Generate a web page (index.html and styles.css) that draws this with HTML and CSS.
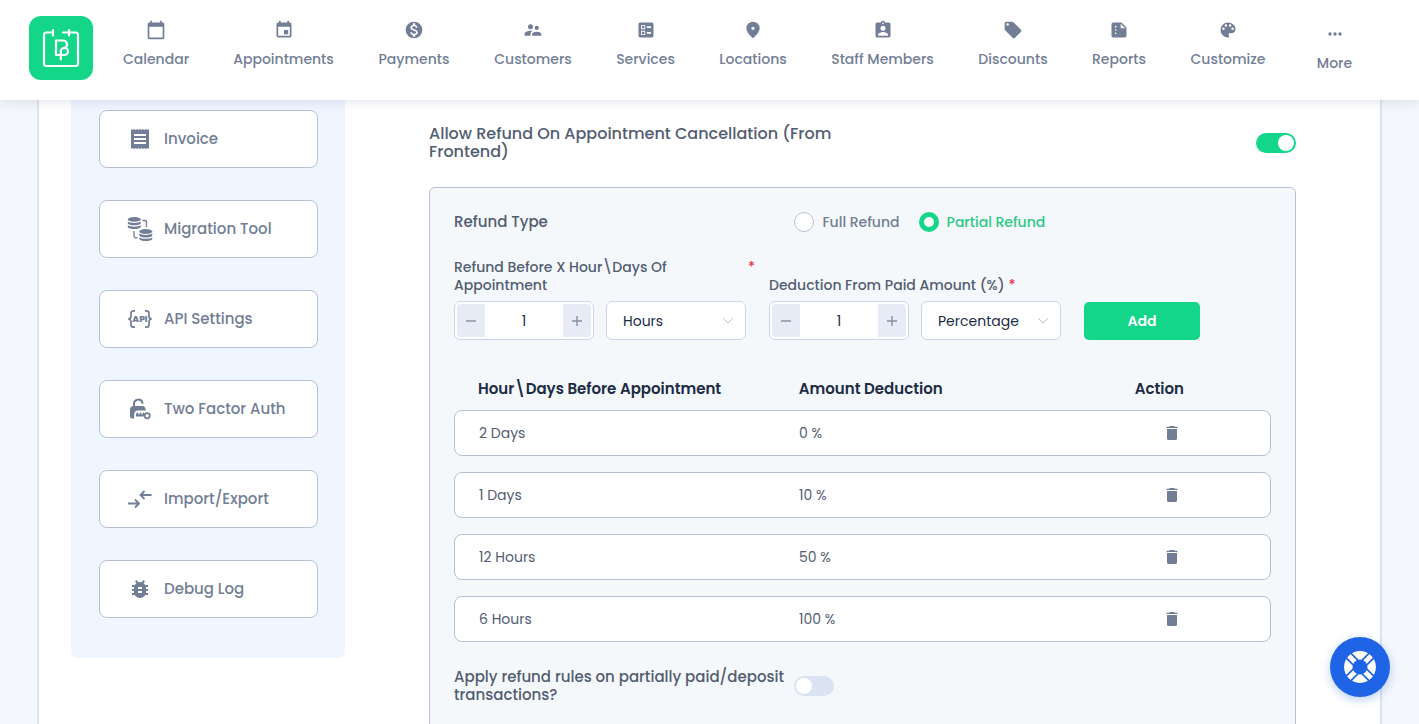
FILE: index.html
```html
<!DOCTYPE html>
<html lang="en">
<head>
<meta charset="utf-8">
<meta name="viewport" content="width=device-width, initial-scale=1">
<title>Refund Settings</title>
<link rel="stylesheet" href="styles.css">
</head>
<body>
<header class="topbar">
  <a class="logo" href="#" aria-label="Home">
    <svg viewBox="0 0 64 64" fill="none" stroke="#fff" stroke-width="2.200" stroke-linecap="round" stroke-linejoin="round">
      <path d="M24 16.500h-6.500a2.500 2.500 0 0 0-2.500 2.500v28.500a2.500 2.500 0 0 0 2.500 2.500h29a2.500 2.500 0 0 0 2.500-2.500V19a2.500 2.500 0 0 0-2.500-2.500H34M24 14v5.500M40 14v5.500"/>
      <path d="M30.500 39H27V24.500h7a4 4 0 0 1 2 7.500M31.800 43.500v-8a3.600 3.600 0 1 1 3.600 3.500H30.500"/>
    </svg>
  </a>
  <nav class="nav" aria-label="Main">
    <a class="nav-item" href="#"><svg class="icon" viewBox="0 0 24 24"><path d="M20 3h-1V1h-2v2H7V1H5v2H4c-1.100 0-2 .9-2 2v16c0 1.100.9 2 2 2h16c1.100 0 2-.9 2-2V5c0-1.100-.9-2-2-2zm0 18H4V8h16v13z"/></svg><span>Calendar</span></a>
    <a class="nav-item" href="#"><svg class="icon" viewBox="0 0 24 24"><path d="M19 3h-1V1h-2v2H8V1H6v2H5a2 2 0 0 0-2 2v14c0 1.100.9 2 2 2h14c1.100 0 2-.9 2-2V5c0-1.100-.9-2-2-2zm0 16H5V8h14v11zm-7-7h5v5h-5z"/></svg><span>Appointments</span></a>
    <a class="nav-item" href="#"><svg class="icon" viewBox="0 0 24 24"><path d="M12 2a10 10 0 1 0 0 20 10 10 0 0 0 0-20zm1.410 16.090V20h-2.670v-1.930c-1.710-.36-3.160-1.460-3.270-3.400h1.960c.1 1.050.82 1.870 2.650 1.870 1.960 0 2.400-.98 2.400-1.590 0-.83-.44-1.610-2.670-2.140-2.480-.6-4.180-1.620-4.180-3.670 0-1.720 1.390-2.840 3.110-3.210V4h2.670v1.950c1.860.45 2.790 1.860 2.850 3.390H14.300c-.05-1.110-.64-1.870-2.220-1.870-1.500 0-2.400.68-2.400 1.640 0 .84.650 1.390 2.670 1.910s4.180 1.390 4.180 3.910c-.01 1.830-1.380 2.830-3.120 3.160z"/></svg><span>Payments</span></a>
    <a class="nav-item" href="#"><svg class="icon" viewBox="0 0 24 24"><path d="M16.500 12a2.500 2.500 0 1 0 0-5 2.500 2.500 0 0 0 0 5zM9 11a3 3 0 1 0 0-6 3 3 0 0 0 0 6zm7.500 3c-1.830 0-5.500.92-5.500 2.750V19h11v-2.250c0-1.830-3.670-2.750-5.500-2.750zM9 13c-2.330 0-7 1.170-7 3.500V19h7v-2.250c0-.85.330-2.340 2.370-3.470C10.500 13.100 9.660 13 9 13z"/></svg><span>Customers</span></a>
    <a class="nav-item" href="#"><svg class="icon" viewBox="0 0 24 24"><path d="M13 9.500h5v-2h-5v2zm0 7h5v-2h-5v2zM19 21H5c-1.100 0-2-.9-2-2V5c0-1.100.9-2 2-2h14c1.100 0 2 .9 2 2v14c0 1.100-.9 2-2 2zM6 11h5V6H6v5zm1-4h3v3H7V7zM6 18h5v-5H6v5zm1-4h3v3H7v-3z"/></svg><span>Services</span></a>
    <a class="nav-item" href="#"><svg class="icon" viewBox="0 0 24 24"><path d="M12 2a8 8 0 0 0-8 8c0 5.500 8 12 8 12s8-6.500 8-12a8 8 0 0 0-8-8zm0 10a2 2 0 1 1 0-4 2 2 0 0 1 0 4z"/></svg><span>Locations</span></a>
    <a class="nav-item" href="#"><svg class="icon" viewBox="0 0 24 24"><path d="M19 3h-4.180a3 3 0 0 0-5.640 0H5c-1.100 0-2 .9-2 2v14c0 1.100.9 2 2 2h14c1.100 0 2-.9 2-2V5c0-1.100-.9-2-2-2zm-7 0a1 1 0 1 1 0 2 1 1 0 0 1 0-2zm0 4a3 3 0 1 1 0 6 3 3 0 0 1 0-6zm6 12H6v-1.400c0-2 4-3.100 6-3.100s6 1.100 6 3.100V19z"/></svg><span>Staff Members</span></a>
    <a class="nav-item" href="#"><svg class="icon" viewBox="0 0 24 24"><path d="m21.410 11.580-9-9A2 2 0 0 0 11 2H4a2 2 0 0 0-2 2v7c0 .55.220 1.050.59 1.420l9 9a2 2 0 0 0 2.820 0l7-7a2 2 0 0 0 0-2.840zM5.500 7a1.500 1.500 0 1 1 0-3 1.500 1.500 0 0 1 0 3z"/></svg><span>Discounts</span></a>
    <a class="nav-item" href="#"><svg class="icon" viewBox="0 0 24 24"><path d="M15 3H5a2 2 0 0 0-2 2v14c0 1.100.9 2 2 2h14a2 2 0 0 0 2-2V9l-6-6zM8 17a1 1 0 1 1 0-2 1 1 0 0 1 0 2zm0-4a1 1 0 1 1 0-2 1 1 0 0 1 0 2zm0-4a1 1 0 1 1 0-2 1 1 0 0 1 0 2zm6 1V4.500l5.500 5.500H14z"/></svg><span>Reports</span></a>
    <a class="nav-item" href="#"><svg class="icon" viewBox="0 0 24 24"><path d="M12 3a9 9 0 0 0 0 18c.83 0 1.500-.67 1.500-1.500 0-.39-.15-.74-.39-1.010-.23-.26-.38-.61-.38-.99 0-.83.670-1.500 1.500-1.500H16a5 5 0 0 0 5-5c0-4.420-4.030-8-9-8zm-5.500 9a1.500 1.500 0 1 1 0-3 1.500 1.500 0 0 1 0 3zm3-4a1.500 1.500 0 1 1 0-3 1.500 1.500 0 0 1 0 3zm5 0a1.500 1.500 0 1 1 0-3 1.500 1.500 0 0 1 0 3zm3 4a1.500 1.500 0 1 1 0-3 1.500 1.500 0 0 1 0 3z"/></svg><span>Customize</span></a>
    <a class="nav-item nav-more" href="#"><svg class="icon" viewBox="0 0 24 24"><circle cx="6" cy="12" r="2"/><circle cx="12" cy="12" r="2"/><circle cx="18" cy="12" r="2"/></svg><span>More</span></a>
  </nav>
</header>

<main class="page">
  <div class="panel">
    <aside class="sidebar">
      <button class="side-btn" type="button"><svg class="side-icon" viewBox="0 0 26 26"><path d="M4 3l1.500 1L7 3l1.500 1L10 3l1.500 1L13 3l1.500 1L16 3l1.500 1L19 3l1.500 1L22 3v20l-1.500-1-1.500 1-1.500-1-1.500 1-1.500-1-1.500 1-1.500-1-1.500 1-1.500-1L7 23l-1.500-1L4 23zM7 8v2h12V8zm0 4v2h12v-2zm0 4v2h12v-2z"/></svg>Invoice</button>
      <button class="side-btn" type="button"><svg class="side-icon" viewBox="0 0 26 26"><ellipse cx="7.300" cy="3.400" rx="6.500" ry="2.400"/><path d="M.8 5.500c2 1.900 11 1.900 13 0v1.800c-1 2.700-12 2.700-13 0zM.8 9.300c2 1.900 11 1.900 13 0v1.600c-1 2.700-12 2.700-13 0z"/><ellipse cx="18.800" cy="15.500" rx="6.500" ry="2.400"/><path d="M12.300 17.600c2 1.900 11 1.900 13 0v1.800c-1 2.700-12 2.700-13 0zM12.300 21.400c2 1.900 11 1.900 13 0V23c-1 2.700-12 2.700-13 0z"/><path d="M15.500 4.500H18a1.500 1.500 0 0 1 1.500 1.500v5M7 15v5a1.800 1.800 0 0 0 1.800 1.800h2" fill="none" stroke="#727e95" stroke-width="1.300"/></svg>Migration Tool</button>
      <button class="side-btn" type="button"><svg class="side-icon" viewBox="0 0 26 26"><path d="M8 4.800H6.500A2.500 2.500 0 0 0 4 7.300V10q0 3-2.800 3 2.800 0 2.800 3v2.700a2.500 2.500 0 0 0 2.500 2.500H8M18 4.800h1.500A2.500 2.500 0 0 1 22 7.300V10q0 3 2.800 3-2.800 0-2.800 3v2.700a2.500 2.500 0 0 1-2.500 2.500H18" fill="none" stroke="#727e95" stroke-width="1.700"/><text class="api-text" x="13" y="16" text-anchor="middle">API</text></svg>API Settings</button>
      <button class="side-btn" type="button"><svg class="side-icon" viewBox="0 0 26 26"><path d="M7 10.500V8a4.300 4.300 0 0 1 8.500-1" fill="none" stroke="#727e95" stroke-width="2" stroke-linecap="round"/><path d="M6 10h9.500q3 0 3.300 4.500H11q-3.500 0-3.800 3.500v4.500H5.500Q3 22.500 3 20v-6.500Q3 10.500 6 10z"/><path d="M9 18.800q0-2.300 1.500-2.300h.8v1.700h1.400v-1.700h1.500v1.700h1.400v-1.700H17v4H9z"/><circle cx="20.200" cy="19.700" r="2.600" fill="none" stroke="#727e95" stroke-width="1.700"/></svg>Two Factor Auth</button>
      <button class="side-btn" type="button"><svg class="side-icon" viewBox="0 0 26 26"><path d="M24.500 9H13.500m4-4-4 4 4 4M1 17.500h11m-4-4 4 4-4 4" fill="none" stroke="#727e95" stroke-width="1.800"/></svg>Import/Export</button>
      <button class="side-btn" type="button"><svg class="side-icon" viewBox="-1 -1 26 26"><path d="M20 8h-2.810a5.990 5.990 0 0 0-1.820-1.960L17 4.410 15.590 3l-2.170 2.170a6 6 0 0 0-2.830 0L8.410 3 7 4.410l1.620 1.630C7.880 6.550 7.260 7.220 6.810 8H4v2h2.090c-.05.330-.09.660-.09 1v1H4v2h2v1c0 .34.040.670.090 1H4v2h2.810a6 6 0 0 0 10.380 0H20v-2h-2.090c.05-.33.090-.66.090-1v-1h2v-2h-2v-1c0-.34-.04-.67-.09-1H20V8zm-6 8h-4v-2h4v2zm0-4h-4v-2h4v2z"/></svg>Debug Log</button>
    </aside>

    <section class="content">
      <div class="setting">
        <label class="setting-label" for="allow-refund">Allow Refund On Appointment Cancellation (From Frontend)</label>
        <input class="switch" id="allow-refund" type="checkbox" checked>
      </div>

      <div class="card">
        <div class="split" role="radiogroup" aria-labelledby="refund-type">
          <span id="refund-type">Refund Type</span>
          <div class="radios">
            <label class="radio-label"><input class="radio" type="radio" name="type"><span>Full Refund</span></label>
            <label class="radio-label"><input class="radio" type="radio" name="type" checked><span>Partial Refund</span></label>
          </div>
        </div>

        <form class="rule-form">
          <div class="field">
            <label class="field-label spread" for="before"><span class="wrap">Refund Before X Hour\Days Of Appointment</span><span class="star">*</span></label>
            <div class="controls">
              <div class="stepper"><button class="step" type="button" aria-label="Decrease"><svg viewBox="0 0 10 10"><path d="M0 5h10"/></svg></button><input class="step-input" id="before" type="text" inputmode="numeric" value="1"><button class="step" type="button" aria-label="Increase"><svg viewBox="0 0 10 10"><path d="M0 5h10M5 0v10"/></svg></button></div>
              <div class="select-wrap"><select class="select" aria-label="Time unit"><option>Hours</option><option>Days</option></select><svg class="chevron" viewBox="0 0 12 8"><path d="M1 1l5 5 5-5"/></svg></div>
            </div>
          </div>
          <div class="field">
            <label class="field-label" for="deduction"><span>Deduction From Paid Amount (%)</span><span class="star">*</span></label>
            <div class="controls">
              <div class="stepper"><button class="step" type="button" aria-label="Decrease"><svg viewBox="0 0 10 10"><path d="M0 5h10"/></svg></button><input class="step-input" id="deduction" type="text" inputmode="numeric" value="1"><button class="step" type="button" aria-label="Increase"><svg viewBox="0 0 10 10"><path d="M0 5h10M5 0v10"/></svg></button></div>
              <div class="select-wrap"><select class="select" aria-label="Deduction type"><option>Percentage</option><option>Fixed</option></select><svg class="chevron" viewBox="0 0 12 8"><path d="M1 1l5 5 5-5"/></svg></div>
            </div>
          </div>
          <button class="add" type="button">Add</button>
        </form>

        <table class="rules">
          <thead><tr><th>Hour\Days Before Appointment</th><th>Amount Deduction</th><th>Action</th></tr></thead>
          <tbody>
            <tr><td>2 Days</td><td>0 %</td><td><button class="trash" type="button" aria-label="Delete"><svg viewBox="0 0 16 16"><path d="M5.500 1h5v.8h3v1.200h-11V1.800h3zM3 4h10v9.500q0 1.500-1.500 1.500h-7Q3 15 3 13.500z"/></svg></button></td></tr>
            <tr><td>1 Days</td><td>10 %</td><td><button class="trash" type="button" aria-label="Delete"><svg viewBox="0 0 16 16"><path d="M5.500 1h5v.8h3v1.200h-11V1.800h3zM3 4h10v9.500q0 1.500-1.500 1.500h-7Q3 15 3 13.500z"/></svg></button></td></tr>
            <tr><td>12 Hours</td><td>50 %</td><td><button class="trash" type="button" aria-label="Delete"><svg viewBox="0 0 16 16"><path d="M5.500 1h5v.8h3v1.200h-11V1.800h3zM3 4h10v9.500q0 1.500-1.500 1.500h-7Q3 15 3 13.500z"/></svg></button></td></tr>
            <tr><td>6 Hours</td><td>100 %</td><td><button class="trash" type="button" aria-label="Delete"><svg viewBox="0 0 16 16"><path d="M5.500 1h5v.8h3v1.200h-11V1.800h3zM3 4h10v9.500q0 1.500-1.500 1.500h-7Q3 15 3 13.500z"/></svg></button></td></tr>
          </tbody>
        </table>

        <div class="split">
          <label for="apply-rules">Apply refund rules on partially paid/deposit transactions?</label>
          <input class="switch" id="apply-rules" type="checkbox">
        </div>
      </div>
    </section>
  </div>
</main>

<button class="help" type="button" aria-label="Help">
  <svg viewBox="0 0 32 32" fill="none">
    <circle cx="16" cy="16" r="11.700" stroke="#fff" stroke-width="8.400"/>
    <g transform="rotate(45 16 16)" stroke="#1f63e6" stroke-width="1.700">
      <path d="M12.700-1v11M19.300-1v11M12.700 22v11M19.300 22v11M-1 12.700h11M-1 19.300h11M22 12.700h11M22 19.300h11"/>
    </g>
  </svg>
</button>
</body>
</html>
```
FILE: styles.css
```css
* { box-sizing: border-box; }

body {
  margin: 0;
  height: 100vh;
  display: flex;
  flex-direction: column;
  overflow: hidden;
  background: #f4f7fb;
  color: #535d71;
  font-family: Poppins, Inter, "Liberation Sans", sans-serif;
  font-size: 15px;
  font-weight: 500;
  line-height: 18px;
}

button, input, select { font: inherit; }
button { cursor: pointer; }

.topbar {
  flex: none;
  display: flex;
  align-items: flex-start;
  gap: 8px;
  padding: 16px 38px 20px 29px;
  background: #fff;
  box-shadow: 0 2px 10px rgba(80, 95, 150, 0.16);
  z-index: 1;
}

.logo {
  flex: none;
  width: 64px;
  height: 64px;
  border-radius: 12px;
  background: #14d689;
}
.logo svg { display: block; }

.nav {
  flex: 1;
  display: grid;
  grid-template-columns: 110fr 145fr 116fr 122fr 103fr 112fr 147fr 114fr 98fr 120fr 93fr;
}

.nav-item {
  display: flex;
  flex-direction: column;
  align-items: center;
  gap: 10px;
  padding-top: 4px;
  color: #727e95;
  font-size: 14px;
  text-decoration: none;
  white-space: nowrap;
}
.nav-more { padding-top: 8px; }

.icon { width: 20px; height: 20px; fill: #727e95; }

.page {
  flex: 1;
  min-height: 0;
  padding: 0 37px;
  overflow: hidden;
}

.panel {
  min-height: 100%;
  display: flex;
  align-items: flex-start;
  gap: 84px;
  padding: 0 84px 0 32px;
  background: #fff;
  border: solid #dbe3f3;
  border-width: 0 2px;
}

.sidebar {
  flex: none;
  width: 274px;
  display: flex;
  flex-direction: column;
  gap: 32px;
  padding: 10px 27px 40px 28px;
  background: #eff6ff;
  border-radius: 0 0 6px 6px;
}

.side-btn {
  display: flex;
  align-items: center;
  gap: 11px;
  height: 58px;
  padding: 0 0 0 27px;
  background: #fff;
  border: 1px solid #b7c0d3;
  border-radius: 8px;
  color: #727e95;
}
.side-icon { width: 26px; height: 26px; fill: #727e95; }
.api-text { font-size: 9px; font-weight: 800; }

.content { flex: 1; min-width: 0; }

.setting {
  display: flex;
  justify-content: space-between;
  align-items: center;
  padding: 25px 0 26px;
}
.setting-label { width: 50%; font-size: 16px; }

.switch {
  appearance: none;
  flex: none;
  width: 40px;
  height: 20px;
  margin: 0;
  padding: 2px;
  border-radius: 10px;
  background: #dbe3f3;
}
.switch::before {
  content: "";
  display: block;
  width: 16px;
  height: 16px;
  border-radius: 50%;
  background: #fff;
}
.switch:checked { background: #14d689; }
.switch:checked::before { margin-left: auto; }

.card {
  padding: 24px 24px 48px;
  background: #f4f8fb;
  border: 1px solid #b7c0d3;
  border-radius: 6px;
}

.split {
  display: grid;
  grid-template-columns: 5fr 7fr;
  align-items: center;
}

.radios { display: flex; gap: 19px; }
.radio-label {
  display: flex;
  align-items: center;
  gap: 8px;
  color: #727e95;
  font-size: 14px;
}
.radio-label:has(:checked) { color: #2cc886; }
.radio {
  appearance: none;
  width: 20px;
  height: 20px;
  margin: 0;
  border: 1px solid #b7c0d3;
  border-radius: 50%;
  background: #fff;
}
.radio:checked { border: 5px solid #14d689; }

.rule-form {
  display: grid;
  grid-template-columns: minmax(0, 315fr) minmax(0, 315fr) minmax(0, 187fr);
  align-items: end;
  margin-top: 26px;
}
.field-label {
  display: flex;
  gap: 4px;
  padding-right: 14px;
  font-size: 14px;
}
.spread { justify-content: space-between; }
.wrap { max-width: 256px; }
.star { color: #e8344e; }

.controls {
  display: grid;
  grid-template-columns: minmax(0, 1fr) minmax(0, 1fr);
  gap: 12px;
  margin-top: 7px;
  padding-right: 23px;
}

.stepper {
  display: flex;
  height: 39px;
  padding: 2px;
  background: #fff;
  border: 1px solid #ccd5ea;
  border-radius: 6px;
}
.step {
  flex: none;
  display: grid;
  place-items: center;
  width: 28px;
  padding: 0;
  border: 0;
  border-radius: 4px 0 0 4px;
  background: #e7ebf5;
}
.step:last-child { border-radius: 0 4px 4px 0; }
.step svg { width: 10px; height: 10px; stroke: #8690a3; stroke-width: 1.4; }
.step-input {
  flex: 1;
  min-width: 0;
  padding: 0;
  border: 0;
  background: none;
  text-align: center;
  color: #202c45;
  font-size: 14px;
  font-weight: 400;
}

.select-wrap { display: grid; align-items: center; }
.select, .chevron { grid-area: 1 / 1; }
.select {
  appearance: none;
  width: 100%;
  height: 39px;
  padding: 0 16px;
  background: #fff;
  border: 1px solid #ccd5ea;
  border-radius: 6px;
  color: #202c45;
  font-size: 14px;
  font-weight: 400;
}
.chevron {
  justify-self: end;
  width: 12px;
  height: 8px;
  margin-right: 12px;
  fill: none;
  stroke: #c0c4cc;
  pointer-events: none;
}

.add {
  width: 116px;
  height: 38px;
  border: 0;
  border-radius: 5px;
  background: #14d689;
  color: #fff;
  font-size: 14px;
  font-weight: 600;
}

.rules { display: block; margin: 39px 0 26px; }
.rules thead, .rules tbody { display: grid; gap: 16px; }
.rules tr {
  display: grid;
  grid-template-columns: 320fr 335fr 112fr;
  align-items: center;
  padding: 0 24px;
}
.rules th, .rules td { padding: 0; text-align: left; }
.rules th {
  padding-bottom: 11px;
  color: #202c45;
  font-size: 15px;
  font-weight: 600;
  line-height: 20px;
}
.rules tbody tr {
  height: 46px;
  background: #fff;
  border: 1px solid #b7c0d3;
  border-radius: 8px;
}
.rules td { font-size: 14px; font-weight: 400; }
.rules td:last-child { padding-left: 30px; }

.trash {
  display: block;
  width: 16px;
  height: 16px;
  padding: 0;
  border: 0;
  background: none;
}
.trash svg { display: block; fill: #727e95; }

.help {
  position: fixed;
  right: 29px;
  bottom: 27px;
  z-index: 2;
  display: grid;
  place-items: center;
  width: 60px;
  height: 60px;
  padding: 0;
  border: 0;
  border-radius: 50%;
  background: #1f63e6;
  box-shadow: 0 3px 10px rgba(31, 99, 230, 0.3);
}
.help svg { width: 32px; height: 32px; }
```
